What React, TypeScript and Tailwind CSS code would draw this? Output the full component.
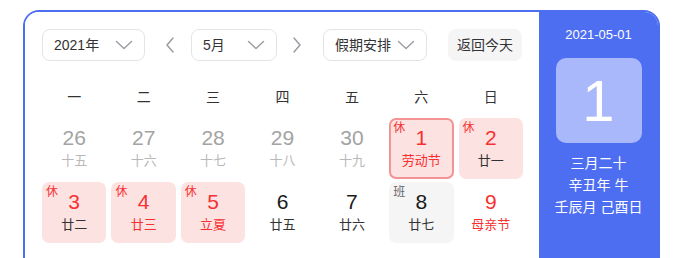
import { ReactNode } from 'react';

type Day = {
  n: number;
  lunar: string;
  tag?: '休' | '班';
  muted?: boolean;
  holiday?: boolean;
  redNum?: boolean;
  redLunar?: boolean;
  selected?: boolean;
  work?: boolean;
};

const WEEK = ['一', '二', '三', '四', '五', '六', '日'];

const DAYS: Day[] = [
  { n: 26, lunar: '十五', muted: true },
  { n: 27, lunar: '十六', muted: true },
  { n: 28, lunar: '十七', muted: true },
  { n: 29, lunar: '十八', muted: true },
  { n: 30, lunar: '十九', muted: true },
  { n: 1, lunar: '劳动节', tag: '休', holiday: true, redNum: true, redLunar: true, selected: true },
  { n: 2, lunar: '廿一', tag: '休', holiday: true, redNum: true },
  { n: 3, lunar: '廿二', tag: '休', holiday: true, redNum: true },
  { n: 4, lunar: '廿三', tag: '休', holiday: true, redNum: true, redLunar: true },
  { n: 5, lunar: '立夏', tag: '休', holiday: true, redNum: true, redLunar: true },
  { n: 6, lunar: '廿五' },
  { n: 7, lunar: '廿六' },
  { n: 8, lunar: '廿七', tag: '班', work: true },
  { n: 9, lunar: '母亲节', redNum: true, redLunar: true },
  { n: 10, lunar: '廿九' },
  { n: 11, lunar: '三十' },
  { n: 12, lunar: '四月' },
  { n: 13, lunar: '初二' },
  { n: 14, lunar: '初三' },
  { n: 15, lunar: '初四', redNum: true },
  { n: 16, lunar: '初五', redNum: true },
];

function Chevron({ className }: { className?: string }) {
  return (
    <svg className={className} width="18" height="10" viewBox="0 0 18 10" fill="none" stroke="currentColor" strokeWidth={1.4}>
      <path d="M1.5 1.5 9 8.5l7.5-7" strokeLinecap="round" strokeLinejoin="round" />
    </svg>
  );
}

function Select({ width, label, gap }: { width: string; label: string; gap?: ReactNode }) {
  return (
    <div
      className={`${width} h-8 rounded-lg border border-[#e3e4e8] flex items-center justify-between pl-[11px] pr-[11px] text-[14px] text-[#333]`}
    >
      <span>{label}</span>
      {gap}
      <Chevron className="text-[#9a9ca3]" />
    </div>
  );
}

function Cell({ d }: { d: Day }) {
  let box = 'border-2 border-transparent';
  if (d.holiday) box = 'bg-[#fde2e2] border-2 border-transparent';
  if (d.selected) box = 'bg-[#fde2e2] border-2 border-[#f39393]';
  if (d.work) box = 'bg-[#f5f5f6] border-2 border-transparent';

  const num = d.muted ? 'text-[#a3a3a3]' : d.redNum ? 'text-[#f73131]' : 'text-[#1a1a1a]';
  const lunar = d.muted ? 'text-[#b8b8b8]' : d.redLunar ? 'text-[#f73131]' : 'text-[#333]';

  return (
    <div className={`relative h-[61px] rounded-[7px] ${box} flex flex-col items-center pt-[6px]`}>
      {d.tag && (
        <span
          className={`absolute left-[2px] top-[1px] text-[12px] leading-[14px] ${
            d.tag === '休' ? 'text-[#f73131]' : 'text-[#666]'
          }`}
        >
          {d.tag}
        </span>
      )}
      <span className={`text-[21px] leading-[24px] ${num}`}>{d.n}</span>
      <span className={`text-[13px] leading-[20px] mt-[1px] ${lunar}`}>{d.lunar}</span>
    </div>
  );
}

export default function App() {
  return (
    <div
      className="w-[680px] h-[258px] overflow-hidden bg-white pl-[23px] pt-[10px]"
      style={{ fontFamily: '"Liberation Sans", "Noto Sans CJK SC", sans-serif' }}
    >
      <div className="w-[637px] h-[440px] rounded-[16px] border-2 border-[#4e6ef2] flex overflow-hidden">
        <div className="w-[514px] bg-white pl-[17px] pt-[17px]">
          <div className="flex items-center">
            <Select width="w-[103px]" label="2021年" />
            <svg className="ml-[20px] text-[#9a9ca3]" width="10" height="18" viewBox="0 0 10 18" fill="none" stroke="currentColor" strokeWidth={1.5}>
              <path d="M8 2 2 9l6 7" strokeLinecap="round" strokeLinejoin="round" />
            </svg>
            <div className="ml-[16px]">
              <Select width="w-[86px]" label="5月" />
            </div>
            <svg className="ml-[15px] text-[#9a9ca3]" width="10" height="18" viewBox="0 0 10 18" fill="none" stroke="currentColor" strokeWidth={1.5}>
              <path d="M2 2l6 7-6 7" strokeLinecap="round" strokeLinejoin="round" />
            </svg>
            <div className="ml-[21px]">
              <Select width="w-[104px]" label="假期安排" />
            </div>
            <div className="ml-[21px] w-[74px] h-8 rounded-lg bg-[#f5f5f6] flex items-center justify-center text-[14px] text-[#333]">
              返回今天
            </div>
          </div>

          <div className="w-[481px] grid grid-cols-7 gap-x-[5px] mt-[22px] h-[28px] items-center">
            {WEEK.map((w) => (
              <div key={w} className="text-center text-[14px] text-[#333]">
                {w}
              </div>
            ))}
          </div>

          <div className="w-[481px] grid grid-cols-7 gap-x-[5px] gap-y-[3px] mt-[7px]">
            {DAYS.map((d) => (
              <Cell key={`${d.muted ? 'p' : 'c'}${d.n}`} d={d} />
            ))}
          </div>
        </div>

        <div className="flex-1 bg-[#4e6ef2] flex flex-col items-center text-white">
          <div className="mt-[14px] text-[13px] leading-[18px]">2021-05-01</div>
          <div className="mt-[14px] w-[86px] h-[85px] rounded-[10px] bg-[#a9b8fa] flex items-center justify-center text-[58px] leading-none">
            1
          </div>
          <div className="mt-[9px] text-[14px] leading-[22px] text-center">
            <div>三月二十</div>
            <div>辛丑年 牛</div>
            <div>壬辰月 己酉日</div>
          </div>
        </div>
      </div>
    </div>
  );
}
